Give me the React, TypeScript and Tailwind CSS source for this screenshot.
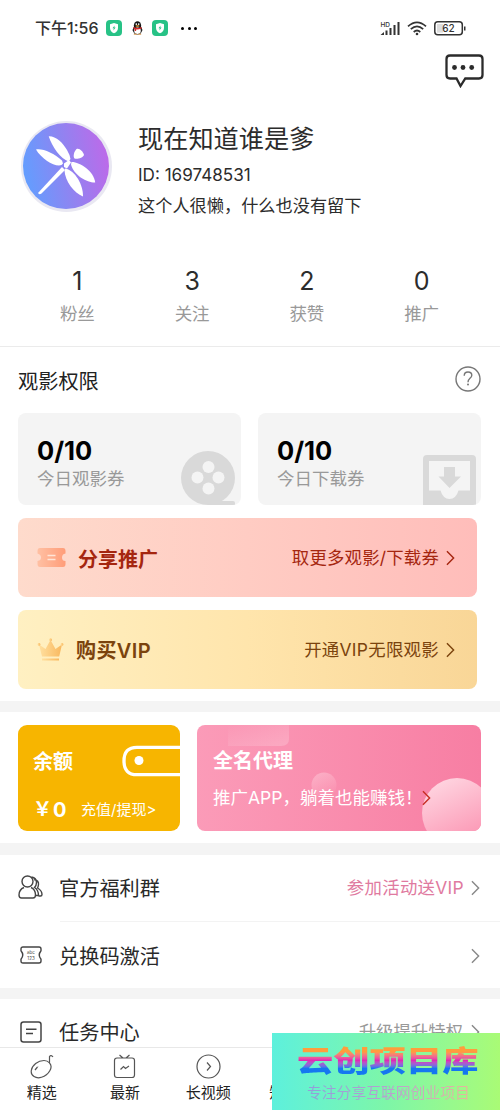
import React from "react";

const Chevron = ({ className }: { className?: string }) => (
  <svg viewBox="0 0 10 18" className={className} fill="none" stroke="currentColor" strokeWidth="1.6">
    <path d="M1 1.5 8.5 9 1 16.5" />
  </svg>
);

const ShieldBadge = () => (
  <svg viewBox="0 0 16 16" className="h-4 w-4">
    <rect width="16" height="16" rx="4" fill="#27c286" />
    <path d="M8 3 12 4.3V8c0 2.700-1.700 4.300-4 5.200C5.700 12.300 4 10.700 4 8V4.300Z" fill="#fff" />
    <path d="M8.600 5.500 6.500 8.300h1.300L7.400 10.500l2.200-3H8.300Z" fill="#27c286" />
  </svg>
);

const Penguin = () => (
  <svg viewBox="0 0 12 15" className="h-[14px] w-[11px]">
    <path d="M2 6 0.500 10 2 10.500M10 6l1.500 4-1.500.5" fill="#111" />
    <ellipse cx="6" cy="5" rx="4" ry="5" fill="#151515" />
    <ellipse cx="6" cy="10" rx="5" ry="4.500" fill="#222" />
    <ellipse cx="6" cy="10.500" rx="3.600" ry="3.500" fill="#fff" />
    <circle cx="4.700" cy="3.300" r="0.900" fill="#fff" />
    <circle cx="7.300" cy="3.300" r="0.900" fill="#fff" />
    <ellipse cx="6" cy="5.200" rx="2.200" ry="0.800" fill="#f2a33a" />
    <path d="M1.500 6.300Q6 8.800 10.500 6.300V8Q6 9.800 4.500 9v1.700H3V8.500L1.500 8Z" fill="#dc2929" />
    <path d="M2 14.300h3.500M6.500 14.300H10" stroke="#d9903b" strokeWidth="1" />
  </svg>
);

const StatusBar = () => (
  <div className="flex h-[54px] items-center pl-[35px] pr-[34px] pt-0.5">
    <span className="w-[63px] whitespace-nowrap text-[16px] font-medium text-[#333]">下午1:56</span>
    <div className="ml-2 flex items-center">
      <ShieldBadge />
      <div className="ml-[10px] mr-[9px]"><Penguin /></div>
      <ShieldBadge />
    </div>
    <div className="ml-[13px] flex gap-[3.500px]">
      <i className="h-[3px] w-[3px] rounded-full bg-black" />
      <i className="h-[3px] w-[3px] rounded-full bg-black" />
      <i className="h-[3px] w-[3px] rounded-full bg-black" />
    </div>
    <div className="ml-auto flex items-center">
      <svg viewBox="0 0 20 15" className="h-[15px] w-5 overflow-visible" fill="#333">
        <text x="0.500" y="5.500" fontSize="6.500" fontWeight="500">HD</text>
        <path d="M0.500 14 4 11v3ZM5.500 9.500h2V14h-2ZM9.500 7h2v7h-2ZM13.500 4h2v10h-2ZM17.500 1h2v13h-2Z" />
      </svg>
      <svg viewBox="0 0 20 15" className="ml-[7px] h-[15px] w-5" fill="none" stroke="#333" strokeWidth="1.700">
        <path d="M1 5.300Q10-2.700 19 5.300M3.800 8.200Q10 2.600 16.200 8.200M6.700 11Q10 8 13.300 11" />
        <circle cx="10" cy="13" r="1.300" fill="#333" stroke="none" />
      </svg>
      <svg viewBox="0 0 32 15" className="ml-[7px] h-[15px] w-8">
        <rect x="0.800" y="0.800" width="27.500" height="13" rx="3" fill="#fff" stroke="#333" strokeWidth="1.500" />
        <rect x="3" y="3" width="6" height="8.600" fill="#ddd" />
        <rect x="30" y="5.500" width="1.500" height="4" fill="#333" />
        <text x="14.500" y="11.200" textAnchor="middle" fontSize="10" fontWeight="500" fill="#333">62</text>
      </svg>
    </div>
  </div>
);

const Avatar = () => (
  <svg viewBox="0 0 92 92" className="h-[92px] w-[92px]">
    <defs>
      <linearGradient id="avatar" x1="0" y1="0.600" x2="1" y2="0.400">
        <stop offset="0" stopColor="#629eff" />
        <stop offset="0.500" stopColor="#8f84f1" />
        <stop offset="1" stopColor="#bd6ae9" />
      </linearGradient>
    </defs>
    <circle cx="45.500" cy="45.500" r="45.500" fill="#e9e8f2" />
    <circle cx="45" cy="45" r="43" fill="url(#avatar)" />
    <g fill="#fff">
      <path d="M27.700 15.300C35 15 42 22 46 29Q49 34 49.500 38L47.500 40.500C40 38 31 26 27.700 15.300Z" />
      <path d="M15 28.500C21 27 33 32 41 39.500L42 42.500Q41 44.500 38 44.500C31 44.500 20 37 15 28.500Z" />
      <path d="M50.500 41C58 40.500 73 50 74.200 61.500C67 62 53 55 50 43.500Z" />
      <path d="M44 47.500C51 48 62 60 62 75.500C53 72 44 60 43.500 49.500Z" />
      <path d="M41 46 44 49 20.500 72.500Q18 74 17 72Z" />
      <path d="M43 42.500 48 39 50 41.500 46 47.500 43 46Z" />
      <path d="M55.500 28C58 26.500 62 30 63 34C62 37 56 38.500 53.500 37.500C51.500 35 53.500 30 55.500 28Z" />
    </g>
  </svg>
);

const stats = [
  { value: "1", label: "粉丝" },
  { value: "3", label: "关注" },
  { value: "2", label: "获赞" },
  { value: "0", label: "推广" },
];

const Profile = () => (
  <>
    <div className="flex h-9 justify-end pr-4">
      <svg viewBox="0 0 39 34" className="h-[34px] w-[39px]" fill="none" stroke="#2b2b2b" strokeWidth="2.300">
        <path d="M5 1.500H34Q37.500 1.500 37.500 5V21Q37.500 24.500 34 24.500H20.300L15.500 32 11.500 24.500H5Q1.500 24.500 1.500 21V5Q1.500 1.500 5 1.500Z" />
        <g fill="#2b2b2b" stroke="none">
          <circle cx="9.500" cy="13.500" r="2.400" />
          <circle cx="18" cy="13.500" r="2.400" />
          <circle cx="26.700" cy="13.500" r="2.400" />
        </g>
      </svg>
    </div>
    <div className="mt-[31px] flex h-[92px] pl-[21px]">
      <Avatar />
      <div className="ml-[25px] whitespace-nowrap text-[#2c2c2c]">
        <div className="h-[35px] text-[25.200px] leading-[36px]">现在知道谁是爹</div>
        <div className="h-[34px] text-[17.100px] leading-[37px]">ID: 169748531</div>
        <div className="text-[17.200px] leading-[31px]">这个人很懒，什么也没有留下</div>
      </div>
    </div>
    <div className="mt-[50px] grid h-[84px] grid-cols-4 border-b border-[#ebebeb] pl-5 pr-[21px]">
      {stats.map((s) => (
        <div key={s.label} className="text-center">
          <div className="h-9 text-[25px] leading-[37px] text-[#2c2c2c]">{s.value}</div>
          <div className="text-[17.500px] leading-[30px] text-[#999]">{s.label}</div>
        </div>
      ))}
    </div>
  </>
);

const Quota = ({ label, children }: { label: string; children: React.ReactNode }) => (
  <div className="flex h-[92px] w-[223px] justify-between overflow-hidden rounded-lg bg-[#f4f4f4] pl-[19px]">
    <div>
      <div className="mt-5 h-[31px] text-[25.500px] font-bold leading-[35px] text-black">0/10</div>
      <div className="text-[17.500px] leading-[29px] text-[#999]">{label}</div>
    </div>
    <div className="self-end">{children}</div>
  </div>
);

const Permissions = () => (
  <div className="h-[354px] pl-[18px] pr-[19px]">
    <div className="flex h-[66px] items-center justify-between">
      <span className="pt-1 text-[20.200px] text-[#222]">观影权限</span>
      <svg viewBox="0 0 26 26" className="mb-0.5 h-[26px] w-[26px]" fill="none" stroke="#777" strokeWidth="1.400">
        <circle cx="13" cy="13" r="12" />
        <path d="M9.200 9.700Q9.300 6 13 6Q16.800 6 16.800 9.300Q16.800 11.200 14.600 12.700Q13 14 13 16.200" />
        <circle cx="13" cy="18.500" r="1" fill="#777" stroke="none" />
      </svg>
    </div>
    <div className="flex justify-between">
      <Quota label="今日观影券">
        <svg viewBox="0 0 60 54" className="h-[54px] w-[60px]">
          <circle cx="27" cy="27" r="27" fill="#d9d9d9" />
          <path d="M27 50H52Q54 50 54 52V54H27Z" fill="#d9d9d9" />
          <g fill="#f4f4f4">
            <circle cx="27.500" cy="16" r="6" />
            <circle cx="16.500" cy="26.500" r="6" />
            <circle cx="37.500" cy="26.500" r="6" />
            <circle cx="27.500" cy="37.500" r="6" />
          </g>
        </svg>
      </Quota>
      <Quota label="今日下载券">
        <svg viewBox="0 0 58 50" className="h-[50px] w-[58px]">
          <path fillRule="evenodd" d="M4 0H49Q53 0 53 4V50H0V4Q0 0 4 0ZM6 6V35.500H17.500Q20 44 26.500 44T35.500 35.500H47V6Z" fill="#d9d9d9" />
          <path d="M21 12H32V21.500H38L26.500 33 15.500 21.500H21Z" fill="#d9d9d9" />
        </svg>
      </Quota>
    </div>
    <div className="mt-[13px] flex h-[79px] w-[459px] items-center rounded-lg bg-linear-to-r from-[#fedbcc] via-[#ffccc3] to-[#ffbdba] pl-[19px] pr-[22px] text-[#a5260f]">
      <svg viewBox="0 0 29 19" className="h-[19px] w-[29px]">
        <defs>
          <linearGradient id="ticket" x2="1">
            <stop stopColor="#ffc0a3" />
            <stop offset="1" stopColor="#ff9d79" />
          </linearGradient>
        </defs>
        <path d="M3 0H26Q28.500 0 28.500 3V5.500Q25 6 25 9.500T28.500 13V16Q28.500 19 26 19H3Q0.500 19 0.500 16V13Q4 12.500 4 9.500T0.500 5.500V3Q0.500 0 3 0Z" fill="url(#ticket)" />
        <path d="M10.500 7.500h8M10.500 11.500h8" stroke="#ffe5d8" strokeWidth="1.500" />
      </svg>
      <span className="ml-[12px] pt-1 text-[20px] font-bold">分享推广</span>
      <span className="ml-auto pt-0.5 text-[17.400px] tracking-[0.2px]">取更多观影/下载券</span>
      <Chevron className="ml-[7px] h-4 w-[9px]" />
    </div>
    <div className="mt-[13px] flex h-[79px] w-[459px] items-center rounded-lg bg-linear-to-r from-[#fff0c2] via-[#ffe5ac] to-[#f9d697] pl-[19px] pr-[22px] text-[#7b430d]">
      <svg viewBox="0 0 27 23" className="h-[23px] w-[27px]">
        <defs>
          <linearGradient id="crown" x2="1">
            <stop stopColor="#ffe0a0" />
            <stop offset="1" stopColor="#f9b85e" />
          </linearGradient>
        </defs>
        <g fill="url(#crown)">
          <path d="M2 6.500 8.500 11 13.500 2 18.500 11 25 6.500 22.200 18.500H5Z" />
          <circle cx="13.500" cy="1.800" r="1.500" />
          <circle cx="2" cy="6.500" r="1.400" />
          <circle cx="25" cy="6.500" r="1.400" />
          <rect x="5" y="20.500" width="17" height="2" />
        </g>
      </svg>
      <span className="ml-3 pt-0.5 text-[20px] font-bold tracking-[0.4px]">购买<span className="font-semibold">VIP</span></span>
      <span className="ml-auto pt-0.5 text-[17.400px] tracking-[0.3px]">开通VIP无限观影</span>
      <Chevron className="ml-[7px] h-4 w-[9px]" />
    </div>
  </div>
);

const Wallet = () => (
  <div className="flex h-[131px] justify-between pl-[18px] pr-[19px] pt-[13px]">
    <div className="h-[106px] w-[162px] rounded-[9px] bg-[#f7b500] text-white">
      <div className="flex h-[73px] items-start justify-between pl-[15px] pt-5">
        <span className="text-[20px] font-bold leading-[35px]">余额</span>
        <svg viewBox="0 0 58 32" className="h-8 w-[58px]" fill="none">
          <path d="M58 2.300H15Q2 2.300 2 16T15 29.700H58" stroke="#fff" strokeWidth="3.300" />
          <circle cx="17" cy="15.500" r="4.500" fill="#fff" />
        </svg>
      </div>
      <div className="flex items-center whitespace-nowrap pl-[15px] leading-6">
        <span className="flex w-[48px] text-[20px] font-bold"><span className="w-5 text-[19px]">￥</span>0</span>
        <span className="text-[15px]">充值/提现&gt;</span>
      </div>
    </div>
    <div className="relative h-[106px] w-[284px] overflow-hidden rounded-lg bg-linear-to-r from-[#fb9bb8] to-[#f77ea3] pl-4 text-white">
      <svg viewBox="0 0 284 106" className="absolute inset-0 h-[106px] w-[284px]">
        <defs>
          <linearGradient id="ball" x1="0.200" y1="0" x2="0.700" y2="1">
            <stop stopColor="#ffd7e2" />
            <stop offset="1" stopColor="#fb91b0" />
          </linearGradient>
          <linearGradient id="haze" x2="1" y2="0.800">
            <stop stopColor="#fff" stopOpacity="0" />
            <stop offset="1" stopColor="#fff" stopOpacity="0.200" />
          </linearGradient>
        </defs>
        <path d="M31 0H92V14Q92 21 84 21H31Z" fill="url(#haze)" />
        <circle cx="127" cy="60" r="12.500" fill="url(#ball)" opacity="0.450" />
        <circle cx="260" cy="88" r="35" fill="url(#ball)" />
      </svg>
      <div className="relative pt-[19px]">
        <div className="h-[36px] text-[20px] font-bold leading-[35px]">全名代理</div>
        <div className="flex items-center whitespace-nowrap text-[17.500px] leading-[36px]">
          <span className="w-[209px]">推广APP，躺着也能赚钱！</span>
          <Chevron className="h-4 w-[9px] text-[#c72f25]" />
        </div>
      </div>
    </div>
  </div>
);

const Menu = () => (
  <div className="text-[20.200px] text-[#292929]">
    <div className="flex h-[66px] items-center pl-[18px] pr-5">
      <svg viewBox="0 0 25 24" className="mb-0.5 h-6 w-[25px]" fill="none" stroke="#444" strokeWidth="1.400">
        <circle cx="9.500" cy="6.500" r="5.500" />
        <path d="M6 12.500Q1 14.500 1 20Q1 23 3.500 23H15Q17.500 23 17.500 20Q17.500 14.500 13 12.500M13.500 2Q18.500 3 18.500 7.500Q18.500 10.500 16.500 12.500Q20.500 15 20.500 20.500H18M16 4.500Q21 5.500 20.500 9.500Q20.300 11.500 19.500 13Q24 15.500 24 19.500Q24 21 22.500 21H20.500" />
      </svg>
      <span className="ml-4 pt-0.5">官方福利群</span>
      <span className="ml-auto pt-px text-[17.400px] tracking-[0.3px] text-[#df7aa0]">参加活动送VIP</span>
      <Chevron className="ml-[7px] h-4 w-[9px] text-[#888]" />
    </div>
    <div className="ml-[60px] h-px bg-[#f3f3f3]" />
    <div className="flex h-[66px] items-center pl-5 pr-5 pt-0.5">
      <svg viewBox="0 0 22 18" className="mb-0.5 h-[18px] w-[22px]" fill="none" stroke="#444" strokeWidth="1.400">
        <path d="M3 1H19Q21 1 21 3V4.800Q17.500 9 21 13.200V15Q21 17 19 17H3Q1 17 1 15V13.200Q4.500 9 1 4.800V3Q1 1 3 1Z" />
        <text x="11" y="7.500" textAnchor="middle" fontSize="4.500" fill="#444" stroke="none">abc</text>
        <text x="11" y="13.500" textAnchor="middle" fontSize="4.500" fill="#444" stroke="none">123</text>
      </svg>
      <span className="ml-[17px] pt-0.5">兑换码激活</span>
      <Chevron className="ml-auto h-4 w-[9px] text-[#888]" />
    </div>
    <div className="h-[11px] bg-[#f4f4f4]" />
    <div className="flex h-[66px] items-center pl-5 pr-5">
      <svg viewBox="0 0 22 22" className="mb-px h-[22px] w-[22px]" fill="none" stroke="#444" strokeWidth="1.500">
        <rect x="1" y="1" width="20" height="20" rx="2.500" />
        <path d="M6 8.200H16.500M6 12.500H13" />
      </svg>
      <span className="ml-[17px] pt-[3px]">任务中心</span>
      <span className="ml-auto pt-px text-[17.400px] text-[#999]">升级提升特权</span>
      <Chevron className="ml-2 h-4 w-[9px] text-[#888]" />
    </div>
  </div>
);

const tabs = [
  {
    label: "精选",
    icon: <path d="M20.500 9C24.500 13 20 21 12.500 23.300C7 25 1.500 22 2.300 16.500C3 11 9 6.500 15 6.500Q18.500 6.500 20.500 9ZM20.500 8.500V2.500Q22 0.500 24 3M6 16 8.500 13M9 12.200V12" />,
  },
  {
    label: "最新",
    icon: <path d="M5 4H20Q22.500 4 22.500 6.500V21Q22.500 23.500 20 23.500H5Q2.500 23.500 2.500 21V6.500Q2.500 4 5 4ZM7.500 1 11 4M17.500 1 14 4M8.500 15.500 11.500 12.500 13.500 14.500 17 12" />,
  },
  { label: "长视频", icon: <path d="M24 12.500A11.500 11.500 0 1 1 1 12.500A11.500 11.500 0 1 1 24 12.500ZM11 8.500 14.500 12.500 11 16.500" /> },
  { label: "短视频", icon: null },
  { label: "", icon: null },
  { label: "", icon: null },
];

const TabBar = () => (
  <div className="absolute inset-x-0 bottom-0 grid h-16 grid-cols-6 border-t border-[#e8e8e8] bg-white pt-1.5">
    {tabs.map((tab, i) => (
      <div key={i} className="flex flex-col items-center">
        <svg viewBox="0 0 25 25" className="h-[25px] w-[25px]" fill="none" stroke="#555" strokeWidth="1.200">
          {tab.icon}
        </svg>
        <span className="text-[15px] leading-[28px] text-[#222]">{tab.label}</span>
      </div>
    ))}
  </div>
);

const Watermark = () => (
  <div className="absolute bottom-px right-0 h-[77px] w-[228px] whitespace-nowrap bg-linear-to-r from-[#5df0dc] via-[#7df6a8] to-[#a9fb75]">
    <div className="ml-[25px] mt-2 h-[42px] w-fit origin-center scale-y-[0.8] bg-linear-to-b from-[#ff9d3c] from-20% via-[#e321b5] via-45% to-[#1577f0] to-68% bg-clip-text text-[36.300px] font-black leading-[42px] text-transparent">
      云创项目库
    </div>
    <div className="-mt-0.5 ml-[35px] w-fit bg-linear-to-r from-[#8f9fda] via-[#b6a1cf] to-[#e6b79a] bg-clip-text text-[14.800px] leading-[24px] text-transparent">
      专注分享互联网创业项目
    </div>
  </div>
);

const App = () => {
  return (
    <div className="relative h-[1111px] w-[500px] overflow-hidden bg-white font-['Inter','Noto_Sans_CJK_SC',sans-serif]">
      <StatusBar />
      <Profile />
      <Permissions />
      <div className="h-[11px] bg-[#f4f4f4]" />
      <Wallet />
      <div className="h-3 bg-[#f4f4f4]" />
      <Menu />
      <TabBar />
      <Watermark />
    </div>
  );
};

export default App;
